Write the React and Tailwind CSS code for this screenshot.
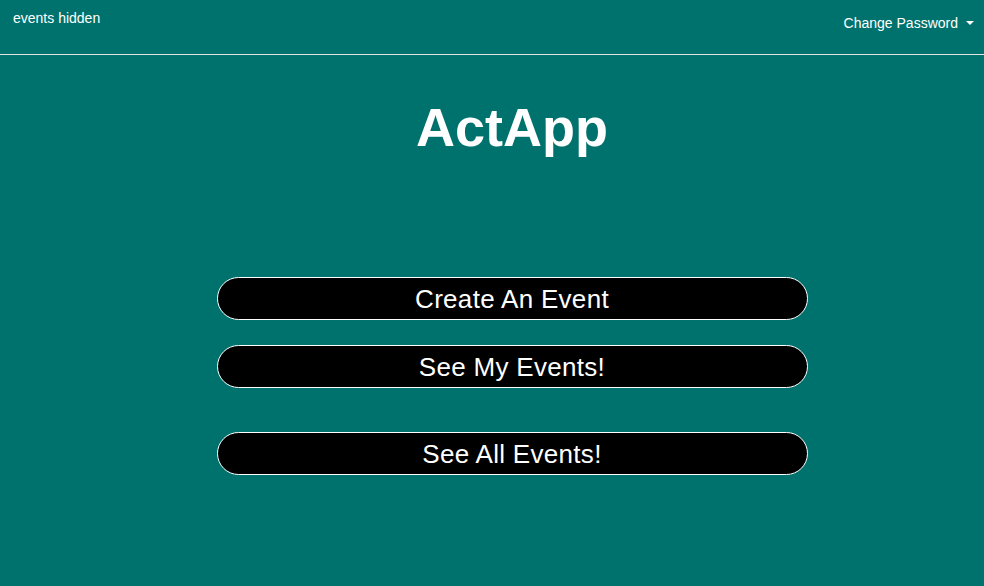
const buttons = [
  { label: 'Create An Event', mt: 'mt-0' },
  { label: 'See My Events!', mt: 'mt-[25px]' },
  { label: 'See All Events!', mt: 'mt-[44px]' },
];

export default function App() {
  return (
    <div className="min-h-[586px] bg-[#00726d] text-white font-['Liberation_Sans',Arial,sans-serif]">
      <header className="h-[55px] flex justify-between border-b border-[#e6e6e6]">
        <div className="pl-[13px] pt-[9px] text-[14px] leading-[18px]">events hidden</div>
        <button className="flex items-center pr-[10px] pt-[14px] self-start text-[14px] leading-[18px]">
          Change Password
          <span className="ml-[8px] w-0 h-0 border-l-[4px] border-r-[4px] border-t-[4px] border-l-transparent border-r-transparent border-t-white"></span>
        </button>
      </header>
      <main className="flex flex-col items-center pl-[40px]">
        <h1 className="mt-[37px] text-[54px] leading-[70px] font-bold">ActApp</h1>
        <div className="mt-[115px] flex flex-col">
          {buttons.map(b => (
            <button key={b.label} className={`${b.mt} w-[591px] h-[43px] bg-black border border-white rounded-full text-[26px] leading-[30px] tracking-[0.3px]`}>
              {b.label}
            </button>
          ))}
        </div>
      </main>
    </div>
  );
}
